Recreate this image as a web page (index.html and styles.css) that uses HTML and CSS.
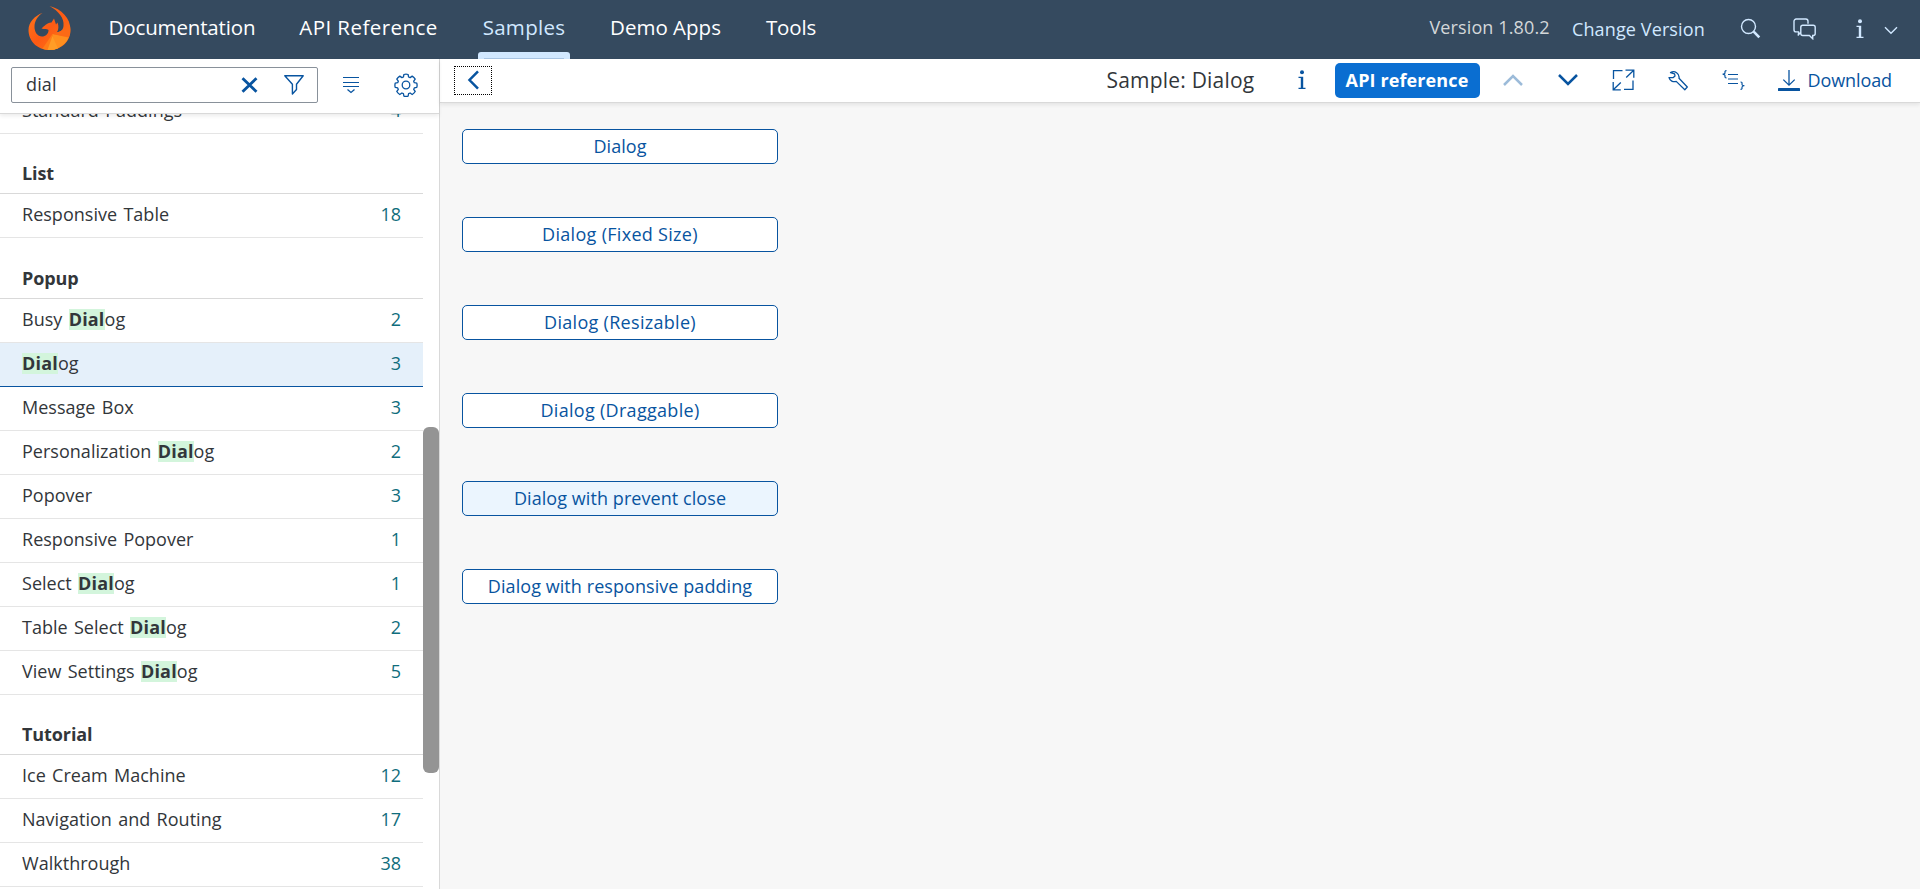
FILE: index.html
```html
<!DOCTYPE html>
<html lang="en">
<head>
<meta charset="utf-8">
<title>Sample: Dialog</title>
<link rel="stylesheet" href="styles.css">
</head>
<body>
<header class="shell">
  <svg class="logo" width="43" height="44" viewBox="0 0 42 44">
    <defs>
      <linearGradient id="fire" x1="0" y1="0" x2="1" y2="1"><stop offset="0" stop-color="#ff7a1c"/><stop offset=".5" stop-color="#fc5a14"/><stop offset="1" stop-color="#ff7a18"/></linearGradient>
      <clipPath id="disc"><circle cx="21" cy="23" r="21"/></clipPath>
    </defs>
    <path fill="url(#fire)" d="M14.3 6.7C6 10 0 16 0 24c0 11 9 20 21 20s21-9 21-20C42 12 33 3 21 0c9 5 15 12 14 20-.5 4-3 6-6.500 6 1.500-2 2-6 .5-9.500L27.500 18.500l-2-6L23 16.500c-5 .5-7 3.500-10 6 2 1 5-.5 7 1.500 0 4-3 6.500-6.500 6.500C9 30.500 6 26 6 21c0-6 3-11 8.300-14.300z"/>
    <g clip-path="url(#disc)">
      <path fill="#ff8f1e" d="M24 28l18 4-9 12H22z"/>
      <path fill="#ff7d18" d="M24 28l-11 16h14z"/>
      <path fill="#ff9d26" d="M24 30l-5 14h11z"/>
      <path fill="#fb6a16" d="M25 28l17-7v10z"/>
    </g>
  </svg>
  <nav class="tabs">
    <a class="tab documentation">Documentation</a>
    <a class="tab api">API Reference</a>
    <a class="tab samples">Samples</a>
    <a class="tab demo">Demo Apps</a>
    <a class="tab tools">Tools</a>
  </nav>
  <div class="shell-right">
    <span class="version">Version 1.80.2</span>
    <a class="change">Change Version</a>
    <svg class="search-icon" width="22" height="22" viewBox="0 0 22 22"><circle cx="8.500" cy="8.500" r="7" fill="none" stroke="currentColor" stroke-width="1.400"/><path d="M13.700 13.700l5.600 5.600" stroke="currentColor" stroke-width="2.600"/></svg>
    <svg class="chat-icon" width="24" height="22" viewBox="0 0 24 22" fill="none" stroke="currentColor" stroke-width="1.400"><path d="M5.500 17.300v-3.400H3.200A2.200 2.200 0 0 1 1 11.700V3.200A2.200 2.200 0 0 1 3.200 1h9.600A2.200 2.200 0 0 1 15 3.200v2.600M4.800 17.500l2.400-2.800M9.800 7.200h10.400a2 2 0 0 1 2 2v6.300a2 2 0 0 1-2 2h-.5v3.200l-3.300-3.200H9.800a2 2 0 0 1-2-2V9.200a2 2 0 0 1 2-2z"/></svg>
    <svg class="info-icon" width="8" height="20" viewBox="0 0 8 20" fill="currentColor"><circle cx="4" cy="2.200" r="2"/><path d="M.5 6.800h4.700v10.900h2.300V19H.5v-1.300h2.300V8.100H.5z"/></svg>
    <svg class="caret-icon" width="14" height="9" viewBox="0 0 14 9"><path d="M1 1.200l6 6 6-6" fill="none" stroke="currentColor" stroke-width="1.400"/></svg>
  </div>
</header>
<div class="split">
  <aside class="master">
    <div class="filter-bar">
      <div class="search-field">
        <span class="query">dial</span>
        <svg width="17" height="16" viewBox="0 0 17 16"><path d="M1.500 1.200l14 13.600M15.500 1.200l-14 13.600" stroke="currentColor" stroke-width="2.800"/></svg>
        <svg class="funnel" width="20" height="20" viewBox="0 0 20 20"><path d="M.8.8h18.400l-6.700 8.400v5.300L8.400 18.900V9.200z" fill="none" stroke="currentColor" stroke-width="1.400" stroke-linejoin="round"/></svg>
      </div>
      <svg class="expand" width="16" height="18" viewBox="0 0 16 18"><path d="M0 1.500h16M0 6.500h16M0 10.500h16" stroke="currentColor" stroke-width="1.100"/><path d="M4.500 13.500L8 16.500l3.500-3" fill="none" stroke="currentColor" stroke-width="1.300"/></svg>
      <svg class="gear" width="24" height="24" viewBox="0 0 24 24" fill="none" stroke="currentColor" stroke-width="1.300" stroke-linejoin="round"><circle cx="12" cy="12" r="3.800"/><path d="M9.900 1.500q2.100-.6 4.200 0l.5 2.500 1.500.6 2.100-1.500q1.900 1.100 3 3l-1.500 2.100.6 1.500 2.500.5q.6 2.100 0 4.200l-2.500.5-.6 1.500 1.500 2.100q-1.100 1.900-3 3l-2.100-1.500-1.500.6-.5 2.500q-2.100.6-4.200 0l-.5-2.500-1.500-.6-2.100 1.500q-1.900-1.100-3-3l1.500-2.100-.6-1.500-2.500-.5q-.6-2.100 0-4.200l2.500-.5.6-1.500-1.500-2.100q1.100-1.900 3-3L7.900 4.600 9.400 4z"/></svg>
    </div>
    <div class="scroller">
      <div class="list">
        <div class="row clipped"><span>Standard Paddings</span><b class="count">4</b></div>
        <div class="group">List</div>
        <div class="row"><span>Responsive Table</span><b class="count">18</b></div>
        <div class="group tall">Popup</div>
        <div class="row"><span>Busy <mark>Dial</mark>og</span><b class="count">2</b></div>
        <div class="row selected"><span><mark>Dial</mark>og</span><b class="count">3</b></div>
        <div class="row"><span>Message Box</span><b class="count">3</b></div>
        <div class="row"><span>Personalization <mark>Dial</mark>og</span><b class="count">2</b></div>
        <div class="row"><span>Popover</span><b class="count">3</b></div>
        <div class="row"><span>Responsive Popover</span><b class="count">1</b></div>
        <div class="row"><span>Select <mark>Dial</mark>og</span><b class="count">1</b></div>
        <div class="row"><span>Table Select <mark>Dial</mark>og</span><b class="count">2</b></div>
        <div class="row"><span>View Settings <mark>Dial</mark>og</span><b class="count">5</b></div>
        <div class="group">Tutorial</div>
        <div class="row"><span>Ice Cream Machine</span><b class="count">12</b></div>
        <div class="row"><span>Navigation and Routing</span><b class="count">17</b></div>
        <div class="row"><span>Walkthrough</span><b class="count">38</b></div>
      </div>
      <div class="track"><div class="thumb"></div></div>
    </div>
  </aside>
  <main class="detail">
    <div class="toolbar">
      <button class="back"><svg width="13" height="20" viewBox="0 0 13 20"><path d="M11 1.300L2.500 10l8.500 8.700" fill="none" stroke="currentColor" stroke-width="2.500"/></svg></button>
      <span class="title">Sample: Dialog</span>
      <svg class="t-info" width="8" height="20" viewBox="0 0 8 20" fill="currentColor"><circle cx="4" cy="2.200" r="2"/><path d="M.5 6.800h4.700v10.900h2.300V19H.5v-1.300h2.300V8.100H.5z"/></svg>
      <button class="primary">API reference</button>
      <svg class="t-up" width="20" height="12" viewBox="0 0 20 12"><path d="M1 11l9-9 9 9" fill="none" stroke="currentColor" stroke-width="2.500"/></svg>
      <svg class="t-down" width="20" height="12" viewBox="0 0 20 12"><path d="M1 1l9 9 9-9" fill="none" stroke="currentColor" stroke-width="2.500"/></svg>
      <svg class="t-full" width="23" height="22" viewBox="0 0 23 22" fill="none" stroke="currentColor" stroke-width="1.300"><path d="M1.500 10V1.700h9M13.500 1.200h8.300v7.600M21.500 1.500l-7.300 7M21 11.500v8.800h-9M1.200 13v7.800h7.600M1.500 20.500l7.300-7"/></svg>
      <svg class="t-tool" width="21" height="21" viewBox="0 0 21 21" fill="none" stroke="currentColor" stroke-width="1.300" stroke-linejoin="round"><path d="M2.500 2.600A5.600 5.600 0 0 1 11 8.300l8.300 8.700-2.500 2.700-8.600-8.300A5.600 5.600 0 0 1 1 7.600h4.300l1.700-1.500-.4-2.200z"/></svg>
      <svg class="t-code" width="23" height="20" viewBox="0 0 23 20" fill="none" stroke="currentColor" stroke-width="1.200"><path d="M6 4.500h10M6 9h10M6 13.500h10M4.500.6C2.500.6 3 2 3 3S2 4 .7 4.200C2 4.500 3 4.500 3 5.500s-.5 2.300 1.500 2.300M18.500 12c2 0 1.500 1.400 1.500 2.400s1 1.100 2.300 1.300c-1.300.2-2.300.3-2.300 1.300s.5 2.300-1.500 2.300"/></svg>
      <a class="download"><svg width="22" height="21" viewBox="0 0 22 21"><path d="M11 0v15M5.300 9.600l5.700 5.600 5.700-5.600" fill="none" stroke="currentColor" stroke-width="1.300"/><rect y="18" width="22" height="3" rx=".6" fill="currentColor"/></svg><span>Download</span></a>
    </div>
    <div class="content">
      <button class="action">Dialog</button>
      <button class="action airy">Dialog (Fixed Size)</button>
      <button class="action airy">Dialog (Resizable)</button>
      <button class="action airy">Dialog (Draggable)</button>
      <button class="action hover">Dialog with prevent close</button>
      <button class="action">Dialog with responsive padding</button>
    </div>
  </main>
</div>
</body>
</html>
```
FILE: styles.css
```css
* { box-sizing: border-box; }
body { margin: 0; height: 889px; overflow: hidden; background: #f7f7f7; color: #32363a; font: 18px/24px "Open Sans", sans-serif; letter-spacing: .12px; }
svg { display: block; flex: none; }
button { font: inherit; letter-spacing: inherit; padding: 0; }

.shell { height: 59px; display: flex; background: #354a5f; color: #d1e8ff; white-space: nowrap; }
.logo { margin: 6px 0 0 28px; }
.tabs { display: flex; gap: 36px; margin-left: 34px; }
.tab { height: 59px; padding-top: 13px; line-height: 28px; font-size: 20.5px; color: #fff; text-align: center; }
.documentation { width: 154px; letter-spacing: -.15px; }
.api { width: 147px; letter-spacing: .45px; }
.samples { width: 92px; letter-spacing: .3px; color: #d1e8ff; display: flex; flex-direction: column; justify-content: space-between; }
.samples::after { content: ""; height: 7px; border-radius: 3px 3px 0 0; background: linear-gradient(#a9c6e5, #a9c6e5) center 6px / 80px 1px no-repeat #d1e8ff; }
.demo { width: 119px; letter-spacing: 0; }
.tools { width: 60px; letter-spacing: -.15px; }
.shell-right { margin-left: auto; margin-right: 22px; height: 57px; display: flex; align-items: center; }
.version { color: #d3d7d9; width: 143.500px; padding-bottom: 3px; }
.change { width: 167px; margin-left: -1px; margin-right: 1px; }
.search-icon { margin-right: 31px; }
.chat-icon { margin-right: 39px; }
.info-icon { margin-right: 20px; }
.caret-icon { margin-top: 3px; }

.split { height: 830px; display: flex; }
.master { width: 440px; border-right: 1px solid #d9d9d9; background: #fff; display: flex; flex-direction: column; }
.filter-bar { height: 55px; flex: none; display: flex; align-items: center; padding: 0 22px 3px 11px; border-bottom: 1px solid #d9d9d9; box-shadow: 0 2px 4px rgba(0,0,0,.08); color: #0854a0; position: relative; }
.search-field { width: 307px; height: 36px; border: 1px solid #89919a; border-radius: 2px; padding: 0 13px 0 14px; display: flex; align-items: center; }
.query { color: #32363a; margin-right: auto; padding-bottom: 1px; }
.funnel { margin-left: 26px; }
.expand { margin-left: 25px; }
.gear { margin-left: auto; margin-right: -1px; }
.scroller { flex: 1; min-height: 0; display: flex; }
.list { width: 423px; overflow: hidden; }
.row { height: 44px; display: flex; justify-content: space-between; align-items: center; padding: 0 22px 3px 22px; border-bottom: 1px solid #e5e5e5; white-space: nowrap; letter-spacing: .02px; word-spacing: 1.6px; }
.row.clipped { margin-top: -24px; }
.row.selected { background: #e5f0fa; border-bottom-color: #0854a0; }
.count { font-weight: 400; font-size: 18px; letter-spacing: 0; color: #0f6d7c; }
.group { height: 60px; padding: 27px 22px 0; font-weight: 700; border-bottom: 1px solid #d9d9d9; letter-spacing: -.1px; }
.group.tall { height: 61px; padding-top: 28px; }
mark { display: inline-block; height: 21px; line-height: 21px; background: #d3f5dc; color: inherit; font-weight: 700; letter-spacing: .18px; }
.track { width: 16px; padding-top: 313px; }
.thumb { height: 346px; border-radius: 6px; background: #949494; }

.detail { flex: 1; display: flex; flex-direction: column; }
.toolbar { height: 44px; flex: none; display: flex; align-items: center; padding: 0 28px 1px 14px; background: #fff; border-bottom: 1px solid #d9d9d9; box-shadow: 0 2px 4px rgba(0,0,0,.08); color: #0854a0; white-space: nowrap; }
.back { width: 38px; height: 29px; border: 1px dotted #000; background: #fff; color: #0854a0; display: flex; align-items: center; justify-content: center; }
.title { margin-left: auto; width: 148px; font-size: 21px; letter-spacing: .2px; color: #32363a; }
.t-info { margin-left: 43px; }
.primary { width: 145px; height: 35px; margin-left: 29px; border: 0; border-radius: 5px; background: #0a6ed1; color: #fff; font-weight: 700; }
.t-up { margin-left: 23px; color: #9cbbd9; }
.t-down { margin-left: 35px; }
.t-full { margin-left: 34px; }
.t-tool { margin-left: 33px; }
.t-code { margin-left: 33px; }
.download { margin-left: 33px; display: flex; align-items: center; gap: 8px; letter-spacing: -.1px; }
.content { padding: 26px 22px; display: flex; flex-direction: column; gap: 53px; }
.action { width: 316px; height: 35px; border: 1px solid #0854a0; border-radius: 5px; padding-bottom: 2px; background: #fff; color: #0854a0; text-align: center; letter-spacing: .07px; }
.action.airy { letter-spacing: .3px; }
.action.hover { background: #ebf5fe; }
```
